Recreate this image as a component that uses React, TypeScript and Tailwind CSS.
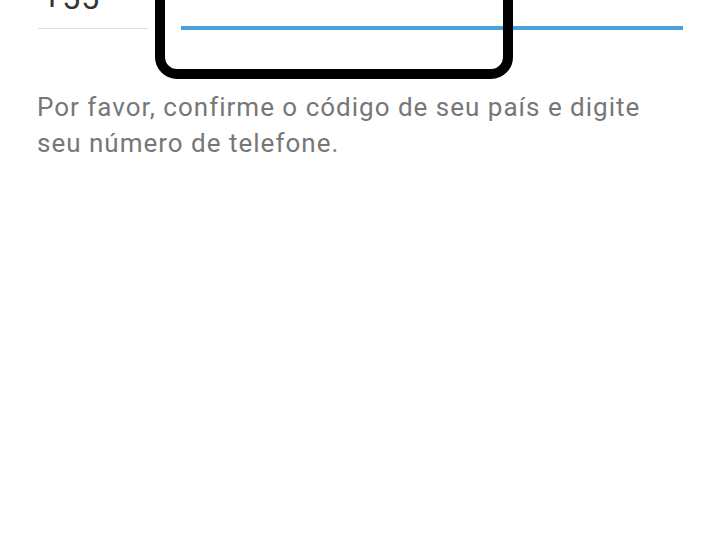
export default function App() {
  return (
    <div className="relative w-[720px] h-[542px] overflow-hidden bg-white font-['Roboto',sans-serif]">
      {/* phone row, cut off at the top */}
      <div className="flex items-end h-[30px]">
        <div className="ml-[38px] w-[110px] border-b border-[#dedede] pb-[14px] pl-[5px] mb-[1px]">
          <span className="block text-[32px] leading-none tracking-[1px] text-[#333333]">+55</span>
        </div>
        <div className="ml-[33px] mr-[37px] flex-1 h-[60px] border-b-4 border-[#4aa2da] relative">
          <div className="absolute left-0 top-[-20px] w-[2px] h-[33px] bg-[#222222]" />
        </div>
      </div>

      {/* highlight box */}
      <div className="absolute left-[155px] top-[-40px] w-[358px] h-[119px] border-[10px] border-black rounded-[22px]" />

      <p className="mt-[59px] pl-[37px] pr-[37px] text-[26px] leading-[36px] tracking-[1px] text-[#777777]">
        Por favor, confirme o código de seu país e digite seu número de telefone.
      </p>
    </div>
  );
}
